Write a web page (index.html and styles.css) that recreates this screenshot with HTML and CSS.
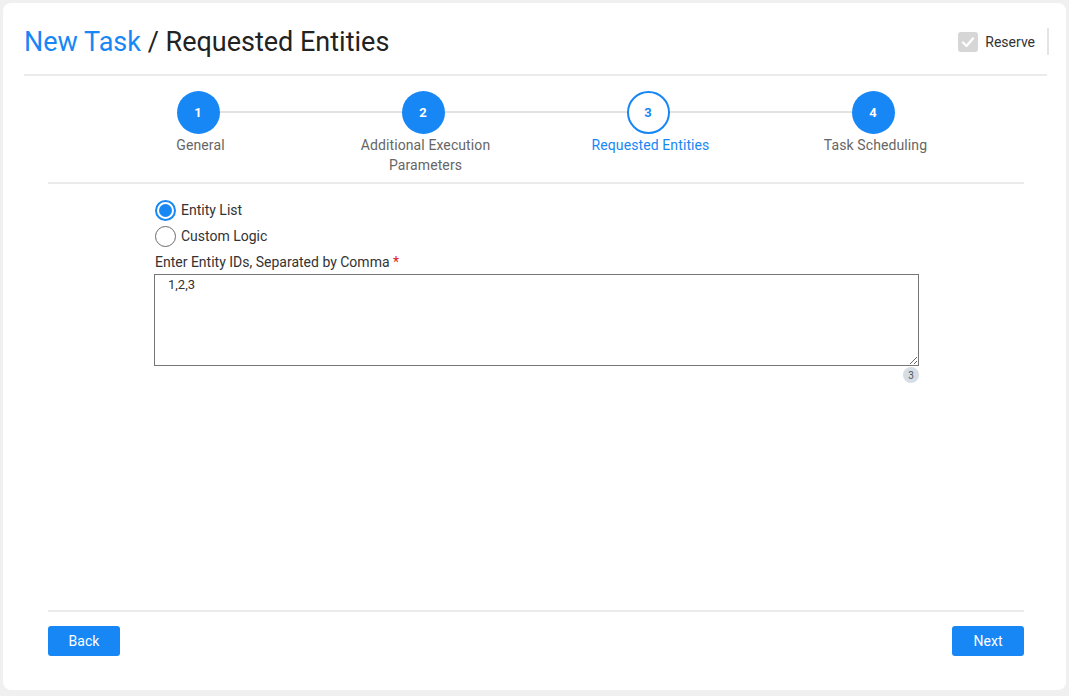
FILE: index.html
```html
<!DOCTYPE html>
<html>
<head>
<meta charset="utf-8">
<link rel="stylesheet" href="styles.css">
</head>
<body>
<div class="page">
  <header class="header">
    <h1 class="title"><span class="crumb">New Task</span> / Requested Entities</h1>
    <div class="reserve">
      <span class="checkbox">
        <svg width="14" height="14" viewBox="0 0 14 14"><path d="M2 7.5 L5.5 11 L12 3.5" fill="none" stroke="#fff" stroke-width="2.4" stroke-linecap="round" stroke-linejoin="round"/></svg>
      </span>
      <span class="reserve-label">Reserve</span>
      <span class="vsep"></span>
    </div>
  </header>

  <div class="stepper">
    <div class="step done"><div class="circle">1</div><div class="label">General</div></div>
    <div class="step done"><div class="circle">2</div><div class="label">Additional Execution<br>Parameters</div></div>
    <div class="step active"><div class="circle">3</div><div class="label">Requested Entities</div></div>
    <div class="step done"><div class="circle">4</div><div class="label">Task Scheduling</div></div>
  </div>

  <section class="card">
    <div class="divider"></div>
    <div class="form">
      <label class="radio-row"><span class="radio checked"></span><span>Entity List</span></label>
      <label class="radio-row"><span class="radio"></span><span>Custom Logic</span></label>
      <div class="field-label">Enter Entity IDs, Separated by Comma <span class="req">*</span></div>
      <textarea class="textarea">1,2,3</textarea>
      <div class="counter-row"><span class="counter">3</span></div>
    </div>
    <footer class="footer">
      <button class="btn">Back</button>
      <button class="btn">Next</button>
    </footer>
  </section>
</div>
</body>
</html>
```

FILE: styles.css
```css
* { box-sizing: border-box; }
html, body { margin: 0; padding: 0; }
body {
  background: #f0f0f0;
  font-family: Roboto, "Liberation Sans", Arial, sans-serif;
  color: #333;
  width: 1069px;
  height: 696px;
  overflow: hidden;
}
.page {
  margin: 3px 3px 0 3px;
  width: 1063px;
  height: 687px;
  background: #fff;
  border-radius: 8px;
  padding: 0 19px 0 21px;
  display: flex;
  flex-direction: column;
}
.header {
  height: 73px;
  border-bottom: 2px solid #ebebeb;
  display: flex;
  align-items: center;
  justify-content: space-between;
  padding-top: 6px;
  flex-shrink: 0;
}
.title {
  margin: 0;
  font-size: 27px;
  font-weight: 400;
  line-height: 30px;
  color: #222;
}
.crumb { color: #1787f5; }
.reserve {
  display: flex;
  align-items: center;
}
.checkbox {
  width: 20px;
  height: 20px;
  border-radius: 3px;
  background: #d6d6d6;
  display: flex;
  align-items: center;
  justify-content: center;
}
.reserve-label {
  margin-left: 7px;
  font-size: 14px;
  color: #333;
}
.vsep {
  width: 2px;
  height: 27px;
  background: #e4e4e4;
  margin-left: 12px;
  margin-right: -2px;
}
.stepper {
  position: relative;
  z-index: 1;
  width: 900px;
  align-self: center;
  display: grid;
  grid-template-columns: repeat(4, 1fr);
  padding-top: 15px;
  margin-bottom: -27px;
  flex-shrink: 0;
}
.stepper::before {
  content: "";
  position: absolute;
  left: 112px;
  right: 112px;
  top: 35px;
  height: 2px;
  background: #e2e2e2;
}
.step {
  position: relative;
  display: flex;
  flex-direction: column;
  align-items: center;
}
.circle {
  width: 43px;
  height: 43px;
  border-radius: 50%;
  background: #1787f5;
  color: #fff;
  font-size: 13px;
  font-weight: 700;
  display: flex;
  align-items: center;
  justify-content: center;
}
.step.active .circle {
  background: #fff;
  border: 2px solid #1787f5;
  color: #1787f5;
}
.label {
  margin-top: 1px;
  margin-left: 5px;
  font-size: 14px;
  line-height: 20px;
  color: #666;
  text-align: center;
  letter-spacing: 0.1px;
}
.step.active .label { color: #1787f5; }
.card {
  flex: 1;
  margin: 0 3px 22px 4px;
  border-radius: 10px;
  box-shadow: 0 0 2px rgba(0,0,0,0.02);
  padding: 34px 20px 12px 20px;
  display: flex;
  flex-direction: column;
}
.divider {
  height: 2px;
  background: #ebebeb;
}
.form {
  margin-left: 106px;
  width: 765px;
  padding-top: 13px;
  display: flex;
  flex-direction: column;
}
.radio-row {
  height: 26px;
  display: flex;
  align-items: center;
  font-size: 14px;
  color: #333;
}
.radio {
  width: 21px;
  height: 21px;
  border-radius: 50%;
  border: 1px solid #6b6b6b;
  margin-left: 1px;
  margin-right: 5px;
  display: flex;
  align-items: center;
  justify-content: center;
}
.radio.checked { border: 2px solid #1787f5; }
.radio.checked::after {
  content: "";
  width: 13px;
  height: 13px;
  border-radius: 50%;
  background: #1787f5;
}
.field-label {
  margin-top: 3px;
  font-size: 14px;
  line-height: 20px;
  color: #333;
  padding-left: 1px;
}
.req { color: #e02020; }
.textarea {
  margin-top: 2px;
  width: 765px;
  height: 92px;
  border: 1px solid #767676;
  border-radius: 0;
  padding: 2px 13px;
  font-family: Roboto, "Liberation Sans", Arial, sans-serif;
  font-size: 13px;
  color: #333;
  resize: vertical;
  outline: none;
}
.counter-row {
  display: flex;
  justify-content: flex-end;
  margin-top: 1px;
}
.counter {
  width: 16px;
  height: 16px;
  border-radius: 50%;
  background: #d5dde5;
  color: #555;
  font-size: 10px;
  display: flex;
  align-items: center;
  justify-content: center;
}
.footer {
  margin-top: auto;
  border-top: 2px solid #ebebeb;
  padding-top: 14px;
  display: flex;
  justify-content: space-between;
}
.btn {
  width: 72px;
  height: 30px;
  border: none;
  border-radius: 3px;
  background: #1787f5;
  color: #fff;
  font-family: Roboto, "Liberation Sans", Arial, sans-serif;
  font-size: 14px;
  font-weight: 400;
  padding: 0;
}
```
